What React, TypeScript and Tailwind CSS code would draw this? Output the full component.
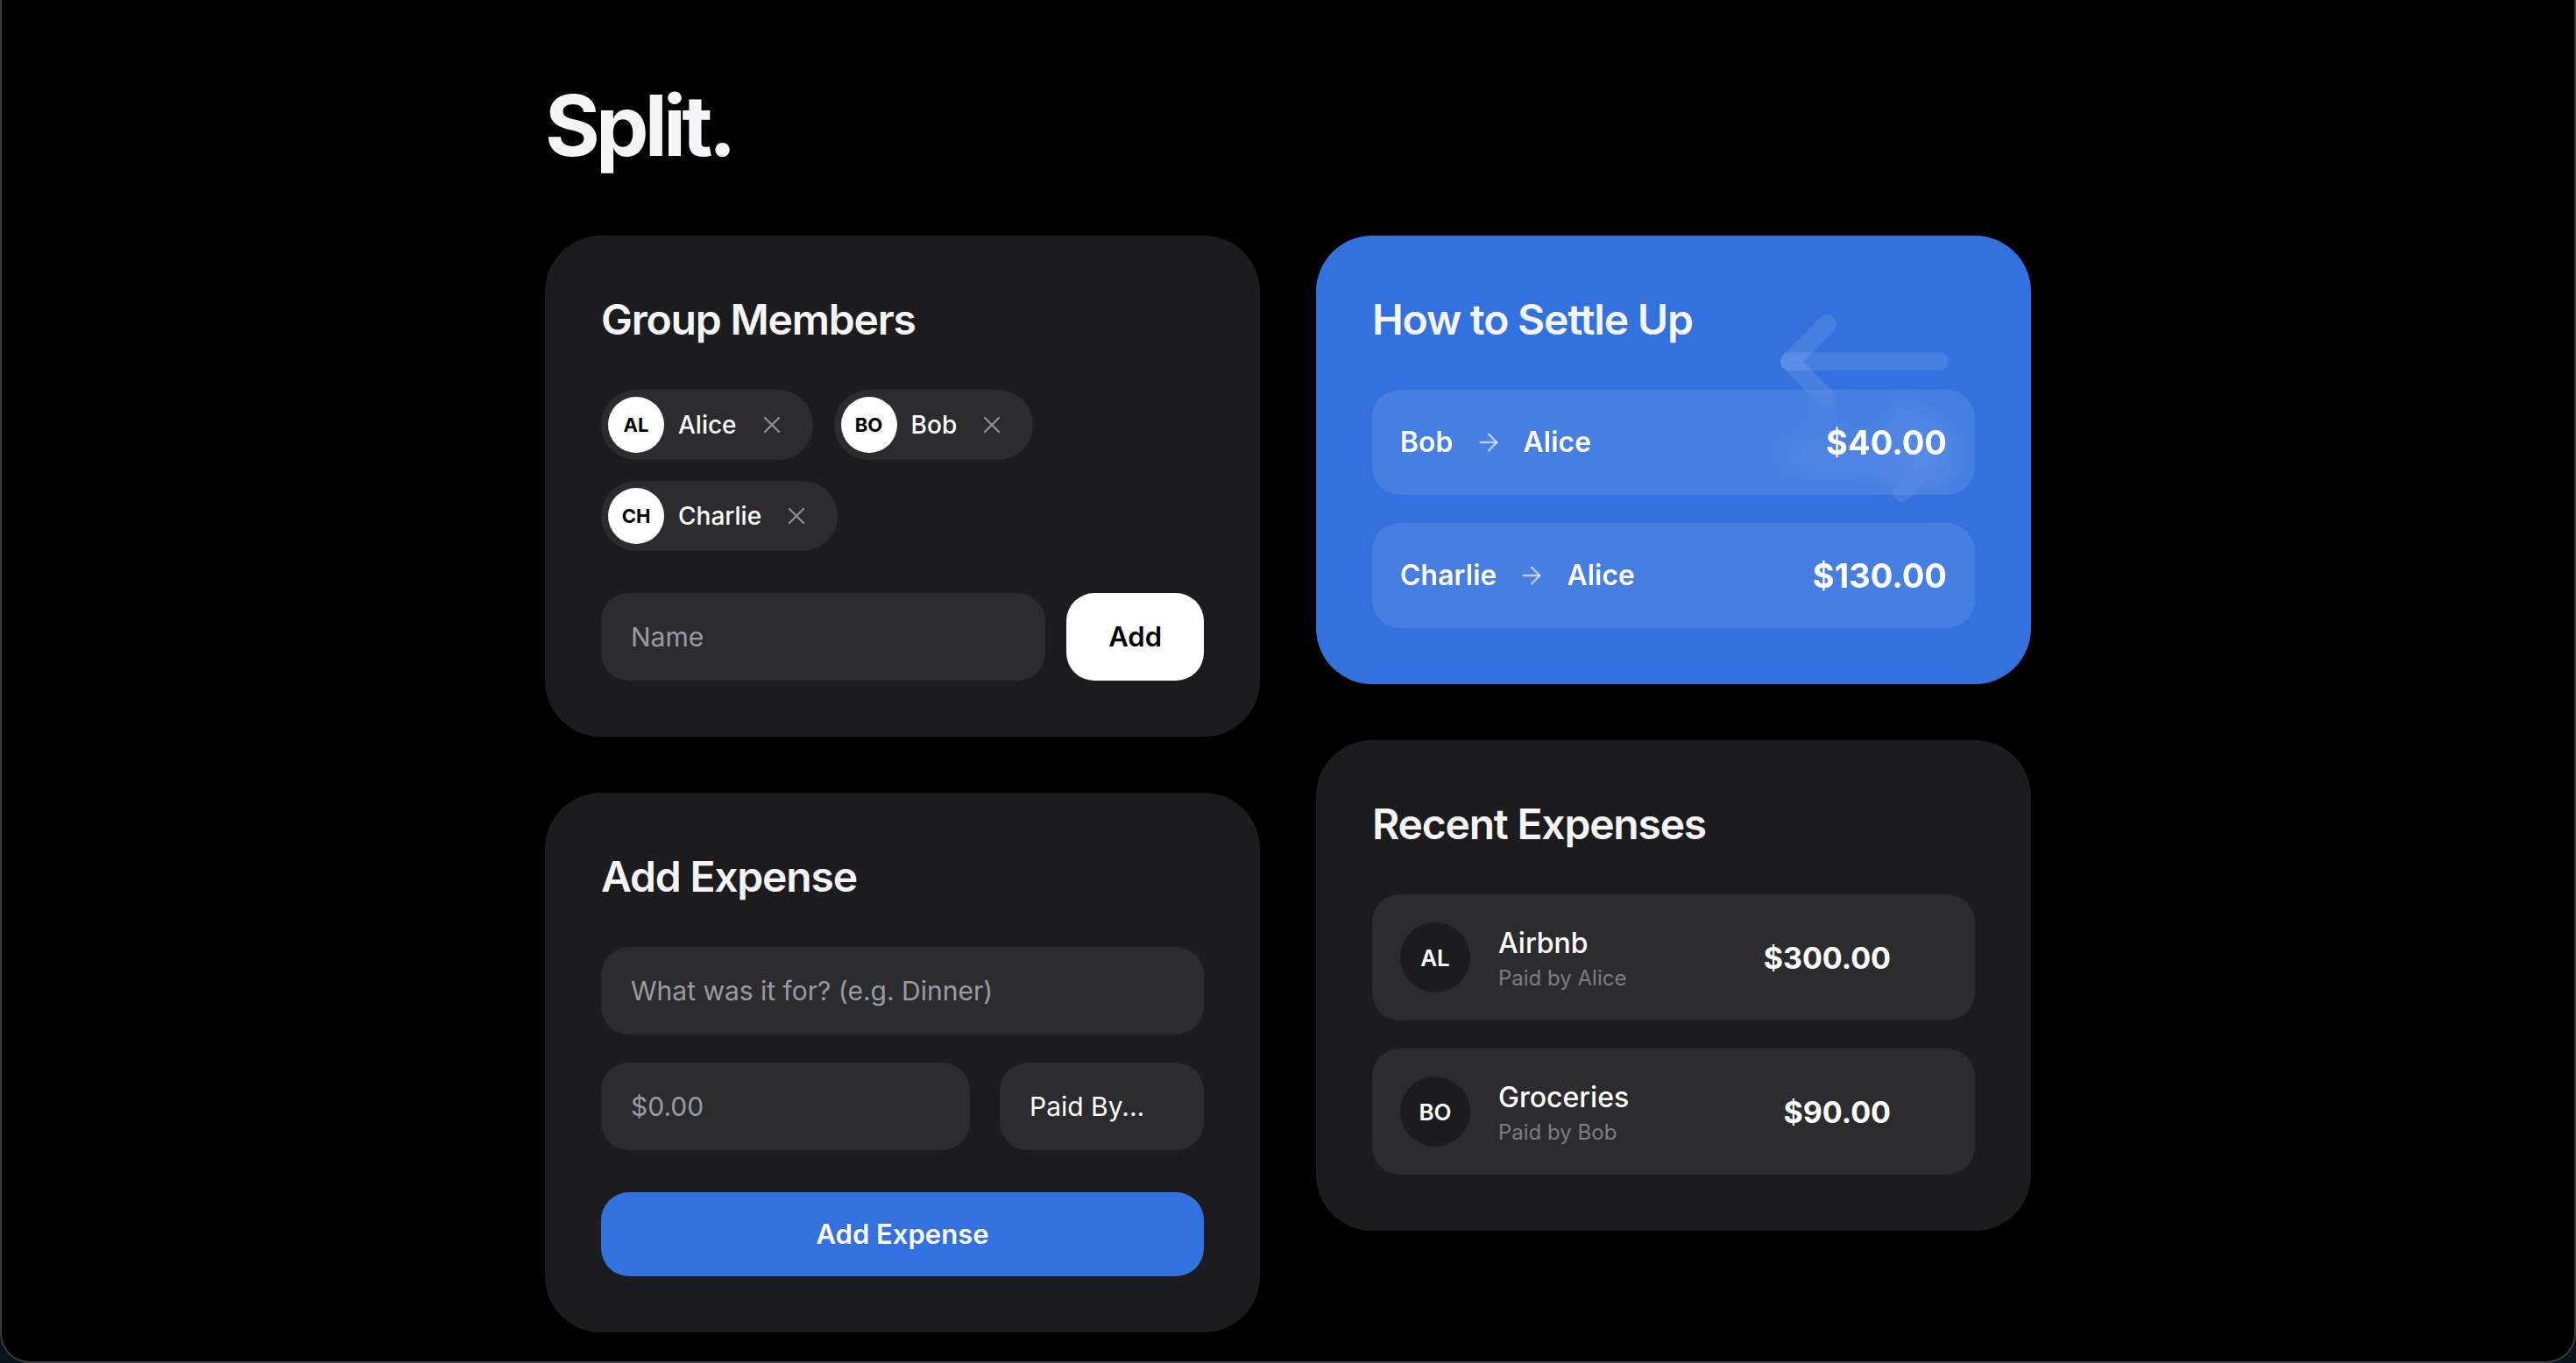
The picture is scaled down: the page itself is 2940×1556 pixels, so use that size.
import React from "react";
import { X, ArrowRight, ArrowLeftRight, Trash2 } from "lucide-react";

const members = [
  { initials: "AL", name: "Alice" },
  { initials: "BO", name: "Bob" },
  { initials: "CH", name: "Charlie" },
];

const settlements = [
  { from: "Bob", to: "Alice", amount: "$40.00" },
  { from: "Charlie", to: "Alice", amount: "$130.00" },
];

const expenses = [
  { initials: "AL", title: "Airbnb", payer: "Alice", amount: "$300.00" },
  { initials: "BO", title: "Groceries", payer: "Bob", amount: "$90.00" },
];

function Heading({ children }: { children: React.ReactNode }) {
  return (
    <h2 className="text-[48px] leading-[64px] font-semibold tracking-tight text-[#f5f5f7] mb-[48px]">
      {children}
    </h2>
  );
}

export default function App() {
  return (
    <div className="w-[2940px] h-[1556px] bg-[#0b141b] font-[family-name:Inter,sans-serif] overflow-hidden">
      <div className="h-full bg-black border-x-2 border-b-2 border-[#3a3a3c] rounded-b-[34px] overflow-hidden">
        <div className="mx-auto w-[1696px] pt-[95px]">
          <h1 className="text-[96px] leading-none font-bold tracking-tighter text-[#f5f5f7]">
            Split.
          </h1>

          <div className="mt-[78px] grid grid-cols-2 gap-x-[64px] items-start">
            {/* Left column */}
            <div className="flex flex-col gap-[64px]">
              {/* Group Members */}
              <section className="bg-[#1c1c1e] rounded-[64px] p-[64px]">
                <Heading>Group Members</Heading>
                <div className="flex flex-wrap gap-[24px]">
                  {members.map((m) => (
                    <div
                      key={m.name}
                      className="h-[80px] rounded-full bg-[#2c2c2e] pl-[8px] pr-[31px] flex items-center"
                    >
                      <div className="w-[64px] h-[64px] rounded-full bg-white flex items-center justify-center text-[22px] font-bold text-black">
                        {m.initials}
                      </div>
                      <span className="ml-[16px] text-[28px] font-medium text-white">{m.name}</span>
                      <button className="ml-[24px] w-[32px] h-[32px] flex items-center justify-center text-[#8e8e93]">
                        <X size={32} strokeWidth={1.75} />
                      </button>
                    </div>
                  ))}
                </div>
                <div className="mt-[48px] flex gap-[24px]">
                  <input
                    placeholder="Name"
                    className="flex-1 min-w-0 h-[100px] rounded-[32px] bg-[#2c2c2e] px-[34px] text-[30px] text-white placeholder:text-[#9a9ba5] outline-none"
                  />
                  <button className="h-[100px] px-[48px] rounded-[32px] bg-white text-black text-[31px] font-semibold">
                    Add
                  </button>
                </div>
              </section>

              {/* Add Expense */}
              <section className="bg-[#1c1c1e] rounded-[64px] p-[64px]">
                <Heading>Add Expense</Heading>
                <div className="flex flex-col gap-[32px]">
                  <input
                    placeholder="What was it for? (e.g. Dinner)"
                    className="w-full h-[100px] rounded-[32px] bg-[#2c2c2e] px-[34px] text-[30px] text-white placeholder:text-[#9a9ba5] outline-none"
                  />
                  <div className="flex gap-[34px]">
                    <input
                      placeholder="$0.00"
                      className="flex-1 min-w-0 h-[100px] rounded-[32px] bg-[#2c2c2e] px-[34px] text-[30px] text-white placeholder:text-[#9a9ba5] outline-none"
                    />
                    <div className="w-[233px] h-[100px] rounded-[32px] bg-[#2c2c2e] px-[34px] flex items-center text-[30px] text-white">
                      Paid By...
                    </div>
                  </div>
                </div>
                <button className="mt-[48px] w-full h-[96px] rounded-[32px] bg-[#3271de] text-white text-[31px] font-semibold">
                  Add Expense
                </button>
              </section>
            </div>

            {/* Right column */}
            <div className="flex flex-col gap-[64px]">
              {/* Settle Up */}
              <section className="relative overflow-hidden bg-[#3271de] rounded-[64px] p-[64px]">
                <ArrowLeftRight
                  size={256}
                  strokeWidth={2}
                  className="absolute top-[69px] right-[62px] text-white/10"
                />
                <div className="relative">
                  <Heading>How to Settle Up</Heading>
                  <div className="flex flex-col gap-[32px]">
                    {settlements.map((s) => (
                      <div
                        key={s.from}
                        className="h-[120px] rounded-[32px] bg-white/10 backdrop-blur-[20px] px-[32px] flex items-center justify-between"
                      >
                        <div className="flex items-center gap-[24px] text-[32px] font-semibold text-white">
                          <span>{s.from}</span>
                          <ArrowRight size={32} strokeWidth={1.75} className="text-white/60" />
                          <span>{s.to}</span>
                        </div>
                        <span className="text-[38px] font-bold text-white">{s.amount}</span>
                      </div>
                    ))}
                  </div>
                </div>
              </section>

              {/* Recent Expenses */}
              <section className="bg-[#1c1c1e] rounded-[64px] p-[64px]">
                <Heading>Recent Expenses</Heading>
                <div className="flex flex-col gap-[32px]">
                  {expenses.map((e) => (
                    <div
                      key={e.title}
                      className="h-[144px] rounded-[32px] bg-[#2c2c2e] px-[32px] flex items-center"
                    >
                      <div className="w-[80px] h-[80px] rounded-full bg-[#1c1c1e] flex items-center justify-center text-[26px] font-semibold text-white">
                        {e.initials}
                      </div>
                      <div className="ml-[32px] flex-1 flex flex-col">
                        <span className="text-[32px] leading-[48px] font-medium text-white">{e.title}</span>
                        <span className="text-[24px] leading-[32px] text-[#7d7d82]">Paid by {e.payer}</span>
                      </div>
                      <span className="text-[34px] font-bold text-white">{e.amount}</span>
                      <button className="ml-[16px] w-[48px] h-[48px] flex items-center justify-center opacity-0 text-[#8e8e93]">
                        <Trash2 size={28} />
                      </button>
                    </div>
                  ))}
                </div>
              </section>
            </div>
          </div>
        </div>
      </div>
    </div>
  );
}
